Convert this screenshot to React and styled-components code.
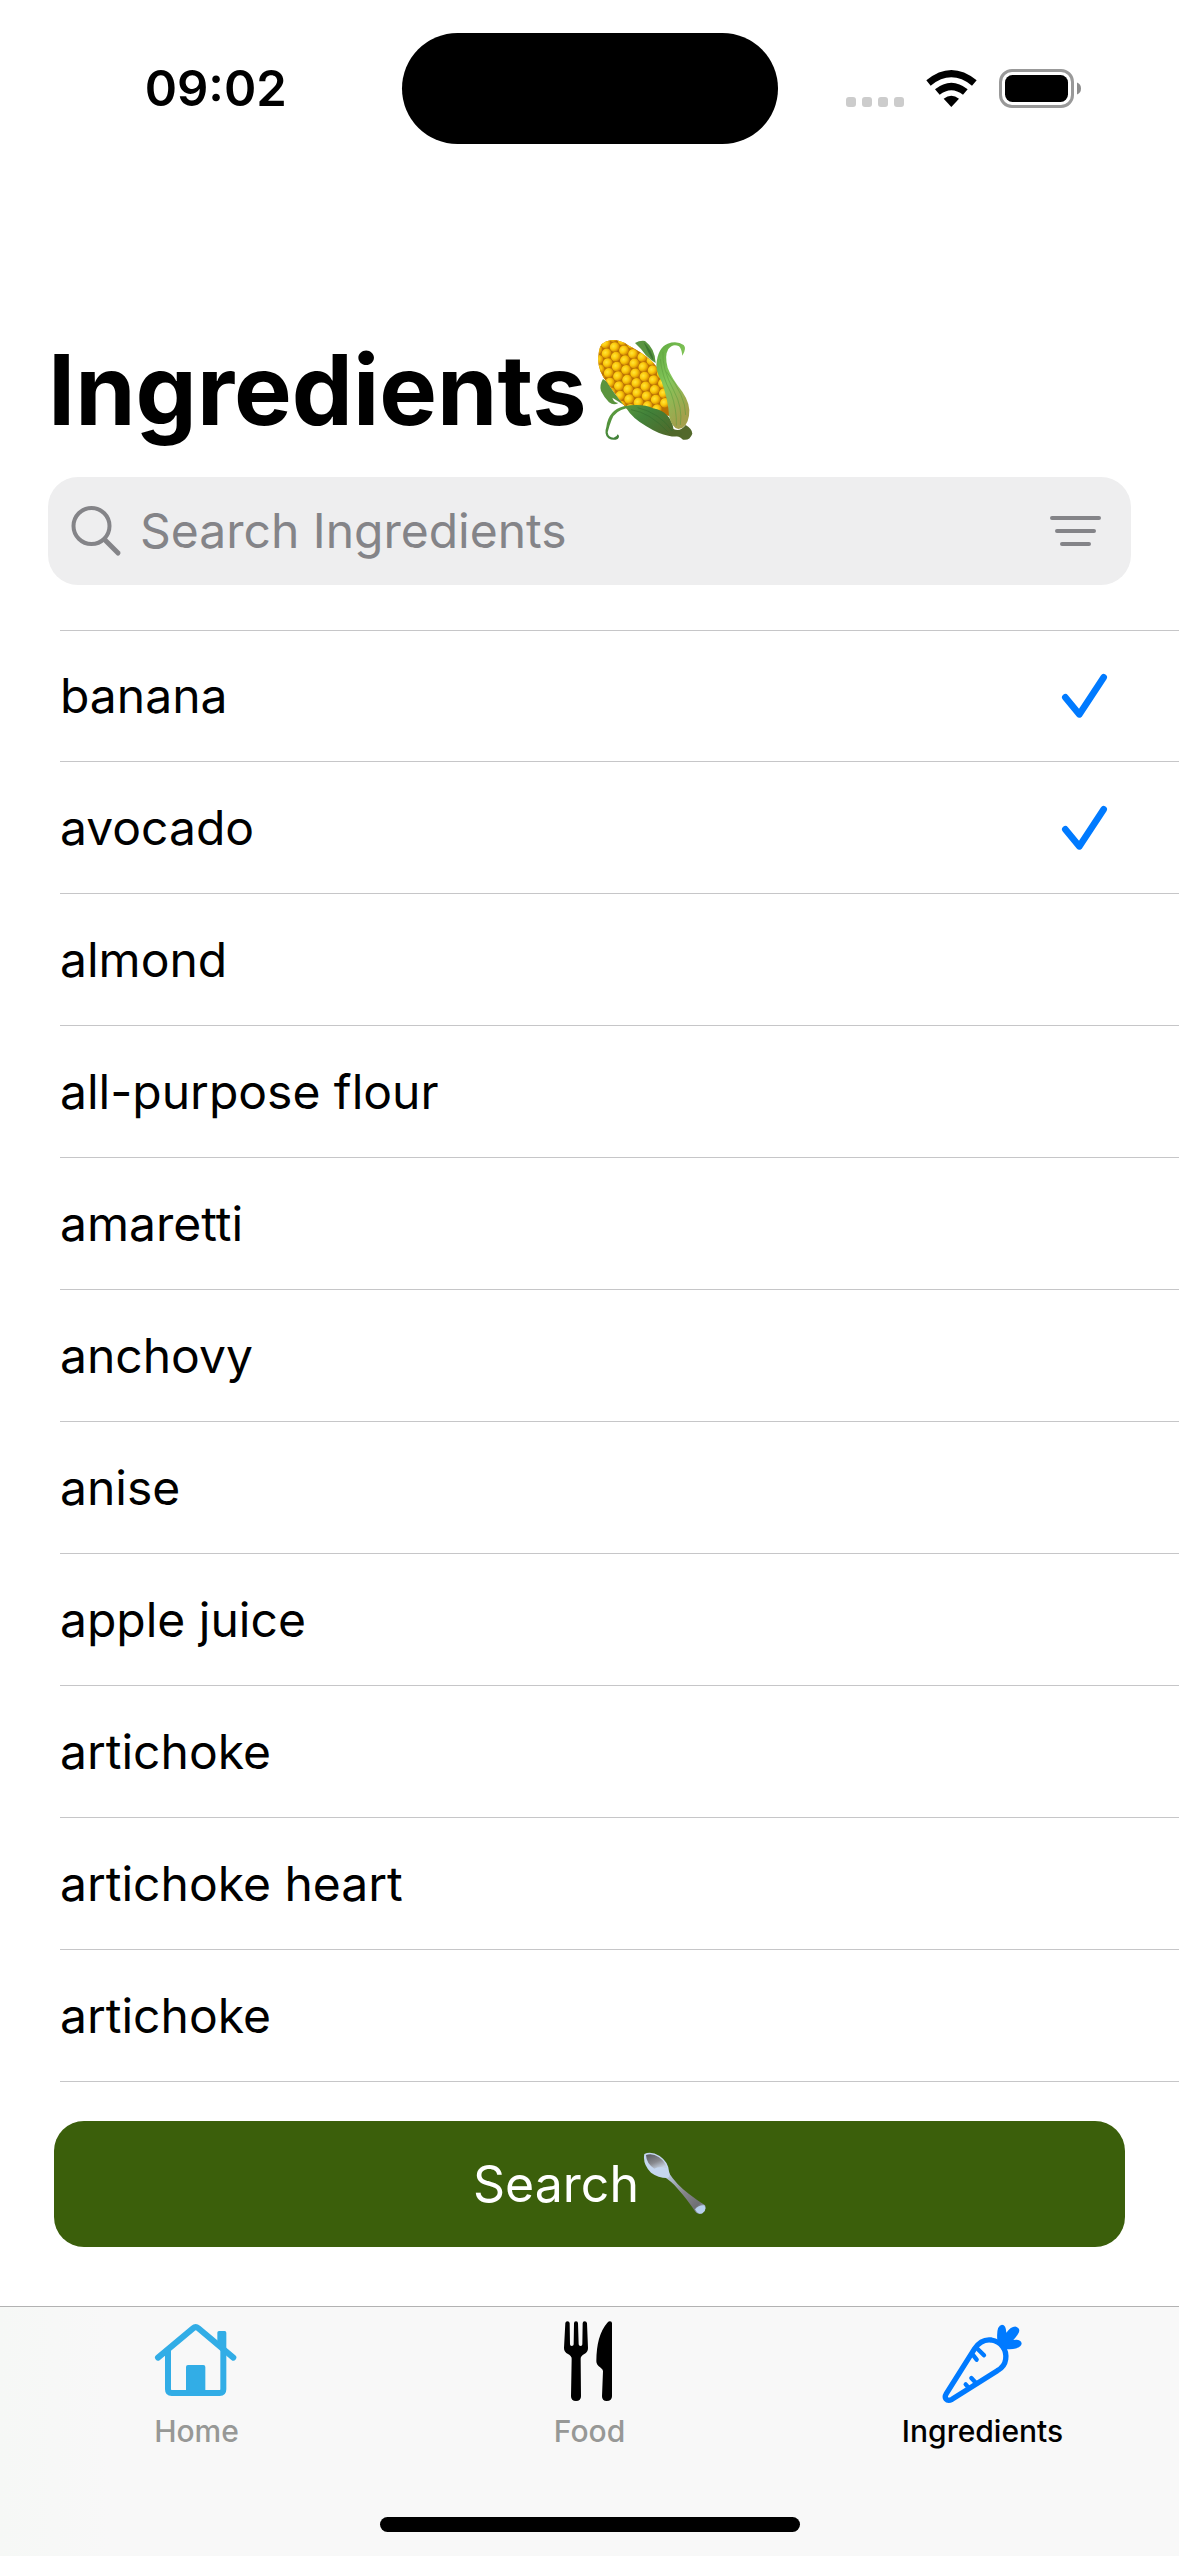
import React, { useState } from "react";
import styled, { createGlobalStyle } from "styled-components";

const GlobalStyle = createGlobalStyle`
  *, *::before, *::after { box-sizing: border-box; }
  body {
    margin: 0;
    background: #fff;
    color: #000;
    font-family: Inter, "Liberation Sans", sans-serif;
  }
`;

const Page = styled.div`
  display: flex;
  flex-direction: column;
  min-height: 100vh;
`;

const StatusBar = styled.header`
  display: grid;
  grid-template-columns: 1fr 376px 1fr;
  align-items: center;
  padding: 33px 30px 0;
`;

const Clock = styled.time`
  justify-self: center;
  font-size: 49px;
  font-weight: 600;
  line-height: 60px;
`;

const Island = styled.div`
  height: 111px;
  border-radius: 56px;
  background: #000;
`;

const StatusIcons = styled.div`
  justify-self: center;
  display: flex;
  align-items: flex-end;
  gap: 22px;
`;

const Main = styled.main`
  display: flex;
  flex-direction: column;
  padding-top: 186px;
`;

const Title = styled.h1`
  display: flex;
  align-items: center;
  gap: 8px;
  margin: 0;
  padding: 0 48px;
  font-size: 97px;
  font-weight: 700;
  line-height: 120px;
`;

const SearchBar = styled.form`
  display: flex;
  align-items: center;
  gap: 17px;
  height: 108px;
  margin: 27px 48px 0;
  padding: 0 30px 0 21px;
  border-radius: 30px;
  background: #eeeeef;
  color: #848488;
`;

const SearchInput = styled.input`
  flex: 1;
  min-width: 0;
  padding: 0;
  border: 0;
  outline: 0;
  background: transparent;
  color: #000;
  font: 400 48px/60px Inter, "Liberation Sans", sans-serif;
  &::placeholder { color: #848488; opacity: 1; }
`;

const IconButton = styled.button`
  display: flex;
  padding: 0;
  border: 0;
  background: none;
  color: inherit;
  cursor: pointer;
`;

const List = styled.ul`
  margin: 45px 0 0;
  padding: 0 0 0 60px;
  list-style: none;
`;

const Item = styled.li`
  display: flex;
  height: 132px;
  border-bottom: 1px solid #c6c6c8;
  &:first-child { border-top: 1px solid #c6c6c8; }
`;

const ItemLabel = styled.label`
  flex: 1;
  display: flex;
  align-items: center;
  justify-content: space-between;
  padding-right: 70px;
  font-size: 48px;
  line-height: 60px;
  cursor: pointer;
`;

const Tick = styled.span`
  display: grid;
  > * { grid-area: 1 / 1; }
`;

const TickInput = styled.input`
  appearance: none;
  width: 48px;
  height: 48px;
  margin: 0;
  &:not(:checked) + svg { visibility: hidden; }
`;

const SearchButton = styled.button`
  display: flex;
  align-items: center;
  justify-content: center;
  gap: 4px;
  height: 126px;
  margin: 39px 54px;
  border: 0;
  border-radius: 30px;
  background: #3b5f0b;
  color: #fff;
  font: 400 50px/60px Inter, "Liberation Sans", sans-serif;
  cursor: pointer;
`;

const TabBar = styled.nav`
  display: flex;
  flex-direction: column;
  align-items: center;
  justify-content: space-between;
  height: 250px;
  margin-top: auto;
  padding: 12px 0 24px;
  border-top: 1px solid #b2b2b2;
  background: linear-gradient(90deg, #f6f8f6 0, #f8f8f8 110px);
`;

const Tabs = styled.div`
  display: grid;
  grid-template-columns: repeat(3, 1fr);
  width: 100%;
`;

const Tab = styled.a`
  display: flex;
  flex-direction: column;
  align-items: center;
  gap: 7px;
  color: ${(p) => (p.$active ? "#000" : "#979896")};
  font-size: 30px;
  font-weight: 500;
  line-height: 36px;
  text-decoration: none;
`;

const HomeIndicator = styled.div`
  width: 420px;
  height: 15px;
  border-radius: 8px;
  background: #000;
`;

const SignalDots = () => (
  <svg width="58" height="11" viewBox="0 0 58 11" fill="#cccccc" aria-hidden="true">
    {[0, 16, 32, 48].map((x) => (
      <rect key={x} x={x} y="0" width="10" height="10" rx="3" />
    ))}
  </svg>
);

const WifiIcon = () => (
  <svg width="51" height="39" viewBox="318 54 153 117" aria-hidden="true">
    <path d="M319 88Q394 26 470 88L456 104Q394 54 332 104Z" />
    <path d="M345 115Q394 76 443 115L429 131Q394 104 359 131Z" />
    <path d="M371 143Q394 125 417 143L394 168Z" />
  </svg>
);

const BatteryIcon = () => (
  <svg width="82" height="39" viewBox="0 0 82 39" aria-hidden="true">
    <rect x="1.5" y="1.5" width="72" height="36" rx="11.5" fill="none" stroke="#999" strokeWidth="3" />
    <rect x="6" y="6" width="63" height="27" rx="7.5" />
    <path d="M78 13.5q4 1.5 4 6t-4 6z" fill="#8c8c8c" />
  </svg>
);

const kernels = [];
for (let row = 0; row < 11; row++) {
  for (let col = 0; col < 7; col++) {
    kernels.push([col * 31 + (row % 2) * 15 - 100, row * 25 - 128]);
  }
}

const CornIcon = () => (
  <svg width="100" height="106" viewBox="50 50 300 318" role="img" aria-label="corn">
    <defs>
      <radialGradient id="kernel" cx="45%" cy="35%" r="65%">
        <stop offset="0" stopColor="#ffe53b" />
        <stop offset=".5" stopColor="#fbc90a" />
        <stop offset="1" stopColor="#cf8204" />
      </radialGradient>
      <linearGradient id="huskRight" x1="0" y1="0" x2=".5" y2="1">
        <stop offset="0" stopColor="#5da83f" />
        <stop offset=".5" stopColor="#85c75a" />
        <stop offset="1" stopColor="#a3a04c" />
      </linearGradient>
      <linearGradient id="huskLow" x1="0" y1="0" x2="1" y2=".6">
        <stop offset="0" stopColor="#66a63f" />
        <stop offset=".5" stopColor="#42823a" />
        <stop offset="1" stopColor="#50682a" />
      </linearGradient>
      <clipPath id="cob">
        <path d="M62 92Q66 64 96 60Q122 56 152 76Q192 96 220 122Q258 160 272 210L278 288Q200 276 146 266Q118 232 86 186Q56 150 60 108Z" />
      </clipPath>
    </defs>
    <path d="M170 68Q184 60 200 62Q230 84 232 128Q218 120 202 104Q188 84 170 68Z" fill="#599440" />
    <path d="M196 66Q222 90 226 122Q214 108 196 66Z" fill="#3c7531" />
    <path d="M74 176Q62 196 68 212Q78 232 92 246Q106 256 120 248Q106 246 102 232L140 256Q108 222 86 184Z" fill="#5a943d" />
    <g clipPath="url(#cob)">
      <rect x="50" y="50" width="240" height="250" fill="#b97203" />
      <g transform="translate(166 166) rotate(-38)">
        {kernels.map(([x, y]) => (
          <ellipse key={`${x},${y}`} cx={x} cy={y} rx="15" ry="14" fill="url(#kernel)" />
        ))}
      </g>
      <path d="M60 130Q100 220 150 266L90 266Z" fill="#a35c00" opacity=".22" />
    </g>
    <path d="M280 324Q304 338 322 314Q342 326 342 340Q334 362 314 358Q298 344 280 346Z" fill="#53692b" />
    <path d="M144 264Q110 272 100 298Q92 318 88 336Q90 352 106 352Q116 350 118 342Q126 348 118 356Q104 362 90 354Q76 342 84 320Q90 270 136 258Q190 248 224 264Q278 274 286 328Q316 330 312 344Q296 352 270 346Q242 342 204 318Q162 294 144 264Z" fill="url(#huskLow)" />
    <path d="M158 268Q214 276 270 336M178 262Q244 278 282 332" stroke="#2f6a2b" strokeWidth="3" fill="none" opacity=".5" />
    <path d="M234 134Q238 82 268 70Q296 60 316 74Q326 84 312 106Q310 86 302 78Q284 68 270 86Q258 106 268 142Q280 174 312 214Q338 252 332 286Q326 324 300 326Q280 322 272 286Q270 240 250 184Q234 156 234 134Z" fill="url(#huskRight)" />
    <path d="M254 94Q250 144 286 210Q314 262 306 314M246 116Q250 166 278 218Q296 268 294 316M264 154Q322 226 322 284" stroke="#5b9a3d" strokeWidth="3" fill="none" opacity=".55" />
  </svg>
);

const SpoonIcon = () => (
  <svg width="63" height="64" viewBox="600 160 189 192" role="img" aria-label="spoon">
    <defs>
      <linearGradient id="bowl" x1="0" y1="0" x2=".6" y2="1">
        <stop offset="0" stopColor="#55575c" />
        <stop offset=".6" stopColor="#88898e" />
        <stop offset="1" stopColor="#c4d0e0" />
      </linearGradient>
      <linearGradient id="handle" x1="0" y1="0" x2="1" y2="1">
        <stop offset="0" stopColor="#c5d8f0" />
        <stop offset=".5" stopColor="#858589" />
        <stop offset=".8" stopColor="#6f6f74" />
        <stop offset="1" stopColor="#b9cfea" />
      </linearGradient>
    </defs>
    <path d="M660 232L676 220Q700 258 738 286Q764 306 786 320Q792 334 778 344Q764 350 756 338Q736 306 704 270Q688 250 660 232Z" fill="url(#handle)" />
    <path d="M604 166Q624 156 650 172Q676 190 678 218Q684 234 672 238Q646 238 624 222Q598 196 604 166Z" fill="#c5d7ef" />
    <path d="M609 169Q628 162 648 176Q668 190 672 209Q650 202 634 210Q610 194 609 169Z" fill="url(#bowl)" />
    <path d="M756 332Q768 318 784 320Q792 334 778 344Q764 348 756 332Z" fill="#b8d0ee" />
  </svg>
);

const SearchIcon = () => (
  <svg width="54" height="54" viewBox="0 0 54 54" fill="none" stroke="currentColor" strokeLinecap="round" aria-hidden="true">
    <circle cx="22.5" cy="22" r="18" strokeWidth="4" />
    <path d="M36 36L49 49" strokeWidth="5" />
  </svg>
);

const FilterIcon = () => (
  <svg width="51" height="30" viewBox="0 0 51 30" stroke="currentColor" strokeWidth="4" strokeLinecap="round" aria-hidden="true">
    <path d="M2 2H49M7 15H44M12 28H39" />
  </svg>
);

const CheckIcon = () => (
  <svg width="48" height="48" viewBox="240 640 144 144" fill="none" stroke="#007aff" strokeWidth="20" strokeLinecap="round" strokeLinejoin="round" aria-hidden="true">
    <path d="M253 716L295 767L368 656" />
  </svg>
);

const HomeIcon = () => (
  <svg width="87" height="87" viewBox="69 87 261 261" fill="none" stroke="#32ade6" strokeLinecap="round" strokeLinejoin="round" aria-hidden="true">
    <path d="M84 203L189 115Q197 108 205 115L310 203" strokeWidth="18" />
    <path d="M114 180V298Q114 309 125 309H269Q280 309 280 298V180" strokeWidth="18" strokeLinecap="butt" />
    <path d="M262 162V128Q262 123 267 123H284Q289 123 289 128V188Z" fill="#32ade6" stroke="none" />
    <path d="M168 308V231Q168 225 174 225H220Q226 225 226 231V308Z" fill="#32ade6" stroke="none" />
  </svg>
);

const ForkKnifeIcon = () => (
  <svg width="87" height="87" viewBox="48 87 261 261" fill="#000" aria-hidden="true">
    <path d="M106 99Q107 94 112 94Q119 94 119 100L120 163Q120 168 125 168Q131 168 131 163L132 100Q132 94 138 94Q144 94 144 100L146 163Q146 168 152 168Q157 168 157 163L158 100Q158 94 164 94Q170 94 171 100L174 174Q174 186 163 192Q152 198 152 206L153 319Q153 333 138 333Q123 333 123 319L125 206Q125 198 114 192Q102 186 102 174Z" />
    <path d="M246 100V319Q246 333 230 333Q216 333 216 319L219 243Q219 238 212 233Q199 225 199 214Q199 136 232 98Q236 94 240 94Q246 94 246 100Z" />
  </svg>
);

const CarrotIcon = () => (
  <svg width="87" height="87" viewBox="177 87 261 261" fill="none" stroke="#007aff" strokeLinecap="round" strokeLinejoin="round" aria-hidden="true">
    <path d="M284 176Q304 146 334 150Q356 154 368 170Q380 186 377 208Q374 230 352 242L216 328Q204 334 198 327Q193 321 199 311Z" strokeWidth="16" />
    <path d="M280 196L290 209M293 177L312 196M257 283L265 292M274 264L288 279" strokeWidth="13" />
    <path d="M352 152Q348 106 366 104Q378 104 379 128Q394 108 408 110Q424 116 414 132Q408 142 400 150Q422 146 425 160Q424 178 378 178Q368 160 352 152Z" fill="#007aff" stroke="none" />
  </svg>
);

const INGREDIENTS = [
  "banana",
  "avocado",
  "almond",
  "all-purpose flour",
  "amaretti",
  "anchovy",
  "anise",
  "apple juice",
  "artichoke",
  "artichoke heart",
  "artichoke",
];

const TABS = [
  { name: "Home", Icon: HomeIcon },
  { name: "Food", Icon: ForkKnifeIcon },
  { name: "Ingredients", Icon: CarrotIcon },
];

export default function App() {
  const [selected, setSelected] = useState([0, 1]);
  const toggle = (i) =>
    setSelected((s) => (s.includes(i) ? s.filter((n) => n !== i) : [...s, i]));

  return (
    <Page>
      <GlobalStyle />
      <StatusBar>
        <Clock>09:02</Clock>
        <Island />
        <StatusIcons>
          <SignalDots />
          <WifiIcon />
          <BatteryIcon />
        </StatusIcons>
      </StatusBar>
      <Main>
        <Title>
          Ingredients
          <CornIcon />
        </Title>
        <SearchBar onSubmit={(e) => e.preventDefault()}>
          <SearchIcon />
          <SearchInput type="text" placeholder="Search Ingredients" aria-label="Search Ingredients" />
          <IconButton type="button" aria-label="Filter">
            <FilterIcon />
          </IconButton>
        </SearchBar>
        <List>
          {INGREDIENTS.map((name, i) => (
            <Item key={i}>
              <ItemLabel>
                {name}
                <Tick>
                  <TickInput type="checkbox" checked={selected.includes(i)} onChange={() => toggle(i)} />
                  <CheckIcon />
                </Tick>
              </ItemLabel>
            </Item>
          ))}
        </List>
        <SearchButton type="button">
          Search
          <SpoonIcon />
        </SearchButton>
      </Main>
      <TabBar>
        <Tabs>
          {TABS.map(({ name, Icon }) => (
            <Tab key={name} href={`#${name.toLowerCase()}`} $active={name === "Ingredients"}>
              <Icon />
              {name}
            </Tab>
          ))}
        </Tabs>
        <HomeIndicator />
      </TabBar>
    </Page>
  );
}
